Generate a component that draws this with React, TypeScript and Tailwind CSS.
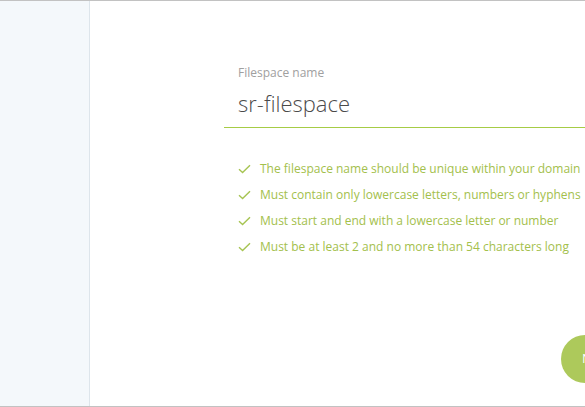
import React from "react";

// Filespace naming step: a single field with its validation rules.

const rules = [
  "The filespace name should be unique within your domain",
  "Must contain only lowercase letters, numbers or hyphens",
  "Must start and end with a lowercase letter or number",
  "Must be at least 2 and no more than 54 characters long",
];

function Check() {
  return (
    <svg width="13" height="10" viewBox="0 0 13 10" className="shrink-0">
      <path d="M1 5.2 L4.6 8.6 L12 1.2" fill="none" stroke="#a6c452" strokeWidth="1.4" />
    </svg>
  );
}

export default function App() {
  return (
    <div
      className="h-[407px] w-[585px] flex flex-col overflow-hidden border-t border-b border-[#c2c2c2] bg-white"
      style={{ fontFamily: '"Open Sans", "Liberation Sans", sans-serif' }}
    >
      <div className="flex flex-1 min-h-0">
        <aside className="w-[90px] shrink-0 bg-[#f4f8fb] border-r border-[#dde5eb]" />
        <main className="relative flex-1 overflow-hidden pt-[64px] pl-[134px]">
          <div className="pl-[14px] pb-[9px]">
            <label className="block text-[12px] leading-4 text-[#a0a0a0]">Filespace name</label>
            <div
              className="mt-[7px] text-[22px] leading-[30px] font-light text-[#4a4a4a]"
              style={{ fontFamily: '"Open Sans Light", "Open Sans", sans-serif' }}
            >
              sr-filespace
            </div>
          </div>
          <div className="h-px bg-[#a6cc45]" />
          <ul className="mt-[32px] pl-[14px] flex flex-col gap-[8px]">
            {rules.map((r) => (
              <li key={r} className="flex items-center gap-[9px] h-[18px] text-[12px] text-[#a3c04c]">
                <Check />
                <span className="whitespace-nowrap">{r}</span>
              </li>
            ))}
          </ul>
          <button className="absolute left-[471px] top-[334px] w-[48px] h-[48px] rounded-full bg-[#adc95b] text-white text-[13px] pl-[21px] text-left">
            Next
          </button>
        </main>
      </div>
    </div>
  );
}
